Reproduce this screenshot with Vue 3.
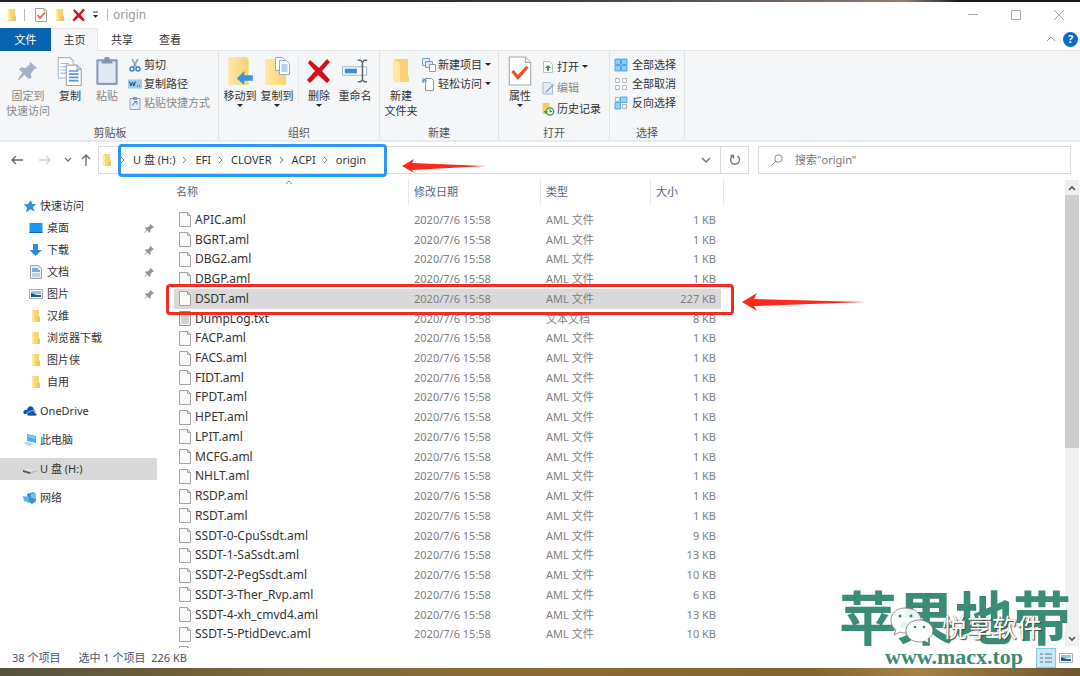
<script setup>
import { ref } from 'vue'

const tabs = ['主页', '共享', '查看']
const crumbs = ['U 盘 (H:)', 'EFI', 'CLOVER', 'ACPI', 'origin']
const query = ref('')

const names = [
  'APIC.aml', 'BGRT.aml', 'DBG2.aml', 'DBGP.aml', 'DSDT.aml', 'DumpLog.txt',
  'FACP.aml', 'FACS.aml', 'FIDT.aml', 'FPDT.aml', 'HPET.aml', 'LPIT.aml',
  'MCFG.aml', 'NHLT.aml', 'RSDP.aml', 'RSDT.aml', 'SSDT-0-CpuSsdt.aml',
  'SSDT-1-SaSsdt.aml', 'SSDT-2-PegSsdt.aml', 'SSDT-3-Ther_Rvp.aml',
  'SSDT-4-xh_cmvd4.aml', 'SSDT-5-PtidDevc.aml'
]
const sizes = [1, 1, 1, 1, 227, 8, 1, 1, 1, 1, 1, 1, 1, 1, 1, 1, 9, 13, 10, 6, 13, 10]
const files = names.map((name, i) => ({
  name,
  text: name.endsWith('.txt'),
  size: sizes[i] + ' KB',
  selected: name === 'DSDT.aml'
}))

const quick = [
  { label: '桌面', icon: 'desktop', pinned: true },
  { label: '下载', icon: 'download', pinned: true },
  { label: '文档', icon: 'document', pinned: true },
  { label: '图片', icon: 'picture', pinned: true },
  { label: '汉维', icon: 'folder' },
  { label: '浏览器下载', icon: 'folder' },
  { label: '图片侠', icon: 'folder' },
  { label: '自用', icon: 'folder' }
]
const places = [
  { label: 'OneDrive', icon: 'cloud' },
  { label: '此电脑', icon: 'pc' },
  { label: 'U 盘 (H:)', icon: 'drive', active: true },
  { label: '网络', icon: 'network' }
]
</script>

<template>
  <div class="desktop">
    <svg class="defs" aria-hidden="true">
      <defs>
        <linearGradient id="gFolder" x1="0" x2="1" y1="0" y2="0"><stop offset="0" stop-color="#ffe9a6" /><stop offset="1" stop-color="#f8d371" /></linearGradient>
        <symbol id="folder" viewBox="0 0 14 14"><path d="M3 1h7v6l1 1v5H3z" fill="#f8d676" /><path d="M3 1l2 1v11l-2-1z" fill="#ffe8a4" /><path d="M8 8h3v5H8z" fill="#f1c75c" /></symbol>
        <symbol id="checkdoc" viewBox="0 0 14 14"><path d="M1.500.5h8.500l2.500 2.500v10.500h-11z" fill="#fff" stroke="#a2a2a2" /><path d="M10 .5V3h2.500" fill="none" stroke="#aaa" /><path d="M3.500 7l2.500 3 5-5.500" fill="none" stroke="#e8643c" stroke-width="1.800" /></symbol>
        <symbol id="redx" viewBox="0 0 24 26"><path d="M3 2l9 8 8-9 3 3-8 9 8 9-3 3-9-8-8 8-3-3 8-9-7-8z" fill="#d40f1b" /></symbol>
        <symbol id="pin" viewBox="0 0 24 24"><path d="M14 2l8 7-3 1-4 5 1 4-3 2-5-5-6 6-1-1 5-7-4-4 3-2 4 1 5-4z" fill="#a3b1c7" /></symbol>
        <symbol id="smallpin" viewBox="0 0 12 12"><path d="M7 1l4 4-2 .5-2 2 .2 2L6 10.500 3.700 8.200 1 11l-.5-.5L3 7.500 1 5.500l1-1 2.200.3 2-2z" fill="#8b939e" /></symbol>
        <symbol id="copy" viewBox="0 0 24 28"><path d="M1 1.500h11l3 3v16H1z" fill="#fff" stroke="#a8b6cb" /><path d="M3 7h8M3 10h8M3 13h8M3 16h8" stroke="#9bb9e3" /><path d="M8.500 8.500h10l4 4v15h-14z" fill="#fff" stroke="#92a3bc" /><path d="M18.500 8.500v4h4" fill="none" stroke="#92a3bc" /><path d="M11 14h9M11 17h9M11 20h9M11 23h9" stroke="#5c94df" stroke-width="1.600" /></symbol>
        <symbol id="paste" viewBox="0 0 22 28"><rect x="1" y="3" width="20" height="24" rx="1" fill="#8b9cba" /><path d="M3 5h16v20H3z" fill="#e1e9f5" /><path d="M6 7V4h2l1-3h4l1 3h2v3z" fill="#8495b1" /></symbol>
        <symbol id="scissors" viewBox="0 0 12 14"><path d="M3 1l4.500 8M9 1L4.500 9" stroke="#8fa7be" stroke-width="1.600" /><circle cx="3" cy="11" r="2" fill="none" stroke="#2f86cf" stroke-width="1.500" /><circle cx="9" cy="11" r="2" fill="none" stroke="#2f86cf" stroke-width="1.500" /></symbol>
        <symbol id="path" viewBox="0 0 14 10"><rect width="14" height="9" y=".5" fill="#9ccbed" /><path d="M1.500 2.500l1.500 4.500 1.500-4 1.500 4 1.500-4.500M9 7h1M11 7h1" fill="none" stroke="#254a70" /></symbol>
        <symbol id="shortcut" viewBox="0 0 12 14"><path d="M1 2.500h10v11H1z" fill="#e5edf8" stroke="#8ea3c3" /><path d="M4 1h4v3H4z" fill="#8295b7" /><path d="M4 10V8l3-2M5 5.500h3v3" fill="none" stroke="#5a7db9" /></symbol>
        <symbol id="moveto" viewBox="0 0 26 28"><path d="M2 1h17l2 3v23H2z" fill="url(#gFolder)" /><path d="M25 18v5h-8v4l-7-6 7-7v4z" fill="#3496e5" /></symbol>
        <symbol id="copyto" viewBox="0 0 28 30"><path d="M2 3h17l4 3v23H2z" fill="url(#gFolder)" /><path d="M12.500 1.500h7l2 2v11h-9z" fill="#fff" stroke="#8fa9cd" /><path d="M16.500 4.500h7l3 3v11h-10z" fill="#fff" stroke="#8fa9cd" /><path d="M18.500 9h6M18.500 11h6M18.500 13h6M18.500 15h6" stroke="#69a3e5" /></symbol>
        <symbol id="rename" viewBox="0 0 28 26"><path d="M.5 8.500h26v9H.5z" fill="#fff" stroke="#9bb1c8" /><path d="M3 10.500h13v5H3z" fill="#318fdd" /><path d="M17 1.500h3l2 2 2-2h3M22 3v20M17 24.500h3l2-2 2 2h3" fill="none" stroke="#5a626b" stroke-width="1.600" /></symbol>
        <symbol id="bigfolder" viewBox="0 0 18 26"><path d="M3 1h13v17l1 1v5H3z" fill="#f7d177" /><path d="M1 1l7 4v20l-7-3z" fill="#ffe8a2" /></symbol>
        <symbol id="newitem" viewBox="0 0 14 14"><path d="M.5.5h7v7h-7z" fill="#e2f0fb" stroke="#7e9db6" /><path d="M3.500 3.500h7v6h-7z" fill="#d3e8f8" stroke="#7e9db6" /><path d="M7.500 6.500h6v7h-6z" fill="#fff" stroke="#8a98a4" /></symbol>
        <symbol id="easy" viewBox="0 0 14 14"><path d="M3.500 1.500h6l2 2v10h-8z" fill="#fff" stroke="#8a98a4" /><path d="M1 1v5M0 4h5M4 1L1 4" stroke="#3d92d4" /></symbol>
        <symbol id="prop" viewBox="0 0 22 28"><path d="M1 1h15l5 5v21H1z" fill="#fff" stroke="#a6a6a6" /><path d="M16 1v5h5" fill="#eee" stroke="#a6a6a6" /><path d="M4 14l5 6 9-10" fill="none" stroke="#e95424" stroke-width="3" /></symbol>
        <symbol id="open" viewBox="0 0 12 14"><path d="M1.500 1.500h6l3 3v8h-9z" fill="#fff" stroke="#b4bec5" /><path d="M6 5l3 3H7v3H5V8H3z" fill="#2e9e48" /></symbol>
        <symbol id="edit" viewBox="0 0 12 14"><path d="M1 1.500h7l2.500 2.500v9H1z" fill="#e5edf8" stroke="#a5b7d4" /><path d="M11 3l-7 7-1 2 2-1 7-7z" fill="#8ba4ce" /></symbol>
        <symbol id="history" viewBox="0 0 13 14"><path d="M1 1h7v11H1z" fill="#f5ce61" /><circle cx="8.500" cy="9.500" r="3.700" fill="#e7f1dc" stroke="#3e9b51" stroke-width="1.300" /><path d="M8.500 7.500v2h2" fill="none" stroke="#33708b" /><path d="M2 9l2.500 3L6 9z" fill="#2f9745" /></symbol>
        <symbol id="selall" viewBox="0 0 14 14"><path d="M1 1h5.500v5.500H1zM7.500 1H13v5.500H7.500zM1 7.500h5.500V13H1zM7.500 7.500H13V13H7.500z" fill="#8fcbf8" stroke="#3598e4" stroke-width=".8" /></symbol>
        <symbol id="selnone" viewBox="0 0 14 14"><path d="M1.500 1.500h4v4h-4zM8.500 1.500h4v4h-4zM1.500 8.500h4v4h-4zM8.500 8.500h4v4h-4z" fill="#fafafa" stroke="#b8bdc1" /></symbol>
        <symbol id="selinv" viewBox="0 0 14 14"><path d="M1.500 1.500h4v4h-4zM8.500 8.500h4v4h-4z" fill="#fafafa" stroke="#aeb7bd" /><path d="M6.500 1H13v5.500H6.500zM1 6.500h5.500V13H1z" fill="#96cff8" stroke="#3e9ee6" stroke-width=".8" /></symbol>
        <symbol id="star" viewBox="0 0 14 14"><path d="M8 1l1.200 4 4.300.2-3.500 2.800 1.500 4.500-4-2.200L3 13.500l1-5L.5 5.500l4.500-.5z" fill="#2a95e2" /></symbol>
        <symbol id="desktop" viewBox="0 0 14 14"><path d="M.5 2h13v10H.5z" fill="#1e97f3" /><path d="M.5 11h13v1H.5z" fill="#0c66b4" /></symbol>
        <symbol id="download" viewBox="0 0 14 14"><path d="M4 1h5v6h4l-6.500 6L.5 7H4z" fill="#2d8cdd" /></symbol>
        <symbol id="document" viewBox="0 0 14 14"><path d="M1.500.5h8l3 3v10h-11z" fill="#e9f1f7" stroke="#91a1ad" /><path d="M3 4h6M3 6h8" stroke="#4699d2" stroke-width="1.500" /><path d="M3 9h8M3 11h8" stroke="#9aafbd" /></symbol>
        <symbol id="picture" viewBox="0 0 14 14"><path d="M.5 2.500h13v9H.5z" fill="#fff" stroke="#a2b0ba" /><path d="M2 4h10v3H2z" fill="#8fc8ee" /><path d="M2 10V6l3 1 3 1h4v2z" fill="#245c86" /></symbol>
        <symbol id="cloud" viewBox="0 0 14 14"><path d="M1 10c-2-3 1-5 3-4 1-5 6-5 7 0l2 2H5v2z" fill="#0c57b6" /><path d="M4 10c0-2 2-3 3-2 2-3 5-1 5 1 3 0 2 3 0 3H6c-2 0-2-1-2-2z" fill="#1954a5" stroke="#fff" stroke-width=".6" /></symbol>
        <symbol id="pc" viewBox="0 0 14 14"><path d="M4 1l9 2v7L4 8z" fill="#47b0ed" /><path d="M5 2l8 2v2L5 4z" fill="#84cef6" /><path d="M0 10l4-1 7 2-5 2z" fill="#c3ced6" /></symbol>
        <symbol id="drive" viewBox="0 0 14 14"><path d="M0 8l6-1 8 1-7 3z" fill="#e6e6e6" /><path d="M0 8l7 2v2L0 10z" fill="#575757" /><path d="M7 10l7-2v1l-7 3z" fill="#b5b5b5" /></symbol>
        <symbol id="network" viewBox="0 0 14 14"><path d="M4 3l6-2 3 2v7l-4 3-4-3z" fill="#3391cf" /><path d="M8 2l5 1v5L8 7z" fill="#74c2ee" /><path d="M0 5l6 1v6L1 10z" fill="#5fb5e6" /></symbol>
        <symbol id="file" viewBox="0 0 12 15"><path d="M.5.5h8l3 3v11H.5z" fill="#fafafa" stroke="#a2a2a2" /><path d="M8.500.5v3h3" fill="none" stroke="#a2a2a2" /></symbol>
        <symbol id="textfile" viewBox="0 0 12 15"><path d="M.5.5h11v14H.5z" fill="#f6f6f6" stroke="#939393" /><path d="M2 4h8M2 6h8M2 8h8M2 10h8M2 12h8" stroke="#a9adb0" /></symbol>
      </defs>
    </svg>

    <div class="window">
      <header class="title">
        <svg class="i14"><use href="#folder" /></svg>
        <span class="bar"></span>
        <button class="qa" aria-label="属性"><svg class="i14"><use href="#checkdoc" /></svg></button>
        <button class="qa" aria-label="新建文件夹"><svg class="i14"><use href="#folder" /></svg></button>
        <button class="qa" aria-label="删除"><svg class="i14"><use href="#redx" /></svg></button>
        <button class="more" aria-label="自定义"><svg width="7" height="8" viewBox="0 0 7 8"><path d="M1 1h5" stroke="#333" /><path d="M1 4h5L3.500 7z" fill="#222" /></svg></button>
        <span class="bar"></span>
        <h1>origin</h1>
        <div class="controls">
          <button aria-label="最小化"><svg width="10" height="10" viewBox="0 0 10 10"><path d="M0 4.500h10" stroke="#aaa" /></svg></button>
          <button aria-label="最大化"><svg width="10" height="10" viewBox="0 0 10 10"><path d="M.5.5h9v9h-9z" fill="none" stroke="#aaa" /></svg></button>
          <button aria-label="关闭"><svg width="10" height="10" viewBox="0 0 10 10"><path d="M0 0l10 10M10 0L0 10" stroke="#aaa" /></svg></button>
        </div>
      </header>

      <nav class="tabs">
        <button class="tab primary">文件</button>
        <button v-for="(t, i) in tabs" :key="t" class="tab" :class="{ current: i === 0 }">{{ t }}</button>
        <button class="collapse" aria-label="折叠"><svg width="10" height="8" viewBox="0 0 10 8"><path d="M1 6l4-4 4 4" fill="none" stroke="#999" /></svg></button>
        <button class="help" aria-label="帮助">?</button>
      </nav>

      <section class="ribbon">
        <div class="group g-clip">
          <div class="tools">
            <button class="big w48 dim"><svg class="i30 inset"><use href="#pin" /></svg>固定到<br />快速访问</button>
            <button class="big w36"><svg class="i30"><use href="#copy" /></svg>复制</button>
            <button class="big w38 dim"><svg class="i30"><use href="#paste" /></svg>粘贴</button>
            <div class="stack">
              <button><svg class="i14"><use href="#scissors" /></svg>剪切</button>
              <button><svg class="i14"><use href="#path" /></svg>复制路径</button>
              <button class="dim"><svg class="i14"><use href="#shortcut" /></svg>粘贴快捷方式</button>
            </div>
          </div>
          <span class="caption">剪贴板</span>
        </div>
        <div class="group g-org">
          <div class="tools">
            <button class="big w38"><svg class="i30"><use href="#moveto" /></svg>移动到<i class="down"></i></button>
            <button class="big w36"><svg class="i30"><use href="#copyto" /></svg>复制到<i class="down"></i></button>
            <span class="split"></span>
            <button class="big w34"><svg class="i30 trim"><use href="#redx" /></svg>删除<i class="down"></i></button>
            <button class="big w38"><svg class="i30 trim"><use href="#rename" /></svg>重命名</button>
          </div>
          <span class="caption">组织</span>
        </div>
        <div class="group g-new">
          <div class="tools">
            <button class="big w38"><svg class="i30 trim"><use href="#bigfolder" /></svg>新建<br />文件夹</button>
            <div class="stack">
              <button><svg class="i14"><use href="#newitem" /></svg>新建项目<i class="down"></i></button>
              <button><svg class="i14"><use href="#easy" /></svg>轻松访问<i class="down"></i></button>
            </div>
          </div>
          <span class="caption">新建</span>
        </div>
        <div class="group g-open">
          <div class="tools">
            <button class="big w38"><svg class="i30"><use href="#prop" /></svg>属性<i class="down"></i></button>
            <div class="stack loose">
              <button><svg class="i14"><use href="#open" /></svg>打开<i class="down"></i></button>
              <button class="dim"><svg class="i14"><use href="#edit" /></svg>编辑</button>
              <button><svg class="i14"><use href="#history" /></svg>历史记录</button>
            </div>
          </div>
          <span class="caption">打开</span>
        </div>
        <div class="group g-sel">
          <div class="tools">
            <div class="stack wide">
              <button><svg class="i14"><use href="#selall" /></svg>全部选择</button>
              <button><svg class="i14"><use href="#selnone" /></svg>全部取消</button>
              <button><svg class="i14"><use href="#selinv" /></svg>反向选择</button>
            </div>
          </div>
          <span class="caption">选择</span>
        </div>
      </section>

      <section class="location">
        <div class="arrows">
          <button aria-label="后退"><svg width="12" height="12" viewBox="0 0 12 12"><path d="M12 6H1M5 2L1 6l4 4" fill="none" stroke="#666" stroke-width="1.300" /></svg></button>
          <button aria-label="前进"><svg width="12" height="12" viewBox="0 0 12 12"><path d="M0 6h11M7 2l4 4-4 4" fill="none" stroke="#d5d5d5" stroke-width="1.300" /></svg></button>
          <button class="tiny" aria-label="最近位置"><svg width="8" height="8" viewBox="0 0 8 8"><path d="M1 2l3 3 3-3" fill="none" stroke="#777" stroke-width="1.300" /></svg></button>
          <button aria-label="上移"><svg width="12" height="12" viewBox="0 0 12 12"><path d="M6 12V1M2 5l4-4 4 4" fill="none" stroke="#666" stroke-width="1.300" /></svg></button>
        </div>
        <div class="address">
          <svg class="i14"><use href="#folder" /></svg>
          <nav class="crumbs">
            <template v-for="c in crumbs" :key="c">
              <svg width="6" height="8" viewBox="0 0 6 8"><path d="M1 1l3 3-3 3" fill="none" stroke="#777" /></svg>
              <a href="#">{{ c }}</a>
            </template>
          </nav>
          <svg class="arrow-one" viewBox="0 0 84 14"><path d="M0 7L12 0l-2 4 74 3-74 4 2 3z" fill="#fb2a1c" /></svg>
          <button class="drop" aria-label="历史"><svg width="10" height="10" viewBox="0 0 10 10"><path d="M1 3l4 4 4-4" fill="none" stroke="#777" stroke-width="1.500" /></svg></button>
          <button class="refresh" aria-label="刷新"><svg width="12" height="12" viewBox="0 0 12 12"><path d="M8.500 2a4.500 4.500 0 1 1-5 0M1.500 1.500h3v3" fill="none" stroke="#777" stroke-width="1.400" /></svg></button>
        </div>
        <label class="search">
          <svg width="12" height="12" viewBox="0 0 12 12"><circle cx="7.500" cy="4.500" r="3.700" fill="none" stroke="#888" /><path d="M5 7L.5 11.500" stroke="#888" /></svg>
          <input v-model="query" type="text" aria-label="搜索" placeholder="搜索&quot;origin&quot;" />
        </label>
      </section>

      <main class="content">
        <aside class="side">
          <a href="#" class="node"><svg class="i14"><use href="#star" /></svg>快速访问</a>
          <a v-for="q in quick" :key="q.label" href="#" class="node child">
            <svg class="i14"><use :href="'#' + q.icon" /></svg>{{ q.label }}
            <svg v-if="q.pinned" class="pinned"><use href="#smallpin" /></svg>
          </a>
          <a v-for="p in places" :key="p.label" href="#" class="node place" :class="{ active: p.active }">
            <svg class="i14"><use :href="'#' + p.icon" /></svg>{{ p.label }}
          </a>
        </aside>

        <div class="listing">
          <table>
            <thead>
              <tr>
                <th>名称<svg class="sort" width="8" height="5" viewBox="0 0 8 5"><path d="M1 4l3-3 3 3" fill="none" stroke="#888" /></svg></th>
                <th>修改日期</th>
                <th>类型</th>
                <th>大小</th>
              </tr>
            </thead>
            <tbody>
              <tr v-for="f in files" :key="f.name" :class="{ selected: f.selected }">
                <td class="name"><svg class="doc"><use :href="f.text ? '#textfile' : '#file'" /></svg>{{ f.name }}</td>
                <td>2020/7/6 15:58</td>
                <td>{{ f.text ? '文本文档' : 'AML 文件' }}</td>
                <td class="size">{{ f.size }}
                  <svg v-if="f.selected" class="arrow-two" viewBox="0 0 124 18"><path d="M0 9L15 0l-3 6 112 3-112 4 3 5z" fill="#fb2a1c" /></svg>
                </td>
              </tr>
            </tbody>
          </table>
          <div class="peek"><svg class="doc"><use href="#file" /></svg></div>
        </div>

        <div class="scroll">
          <button aria-label="向上滚动"><svg width="8" height="6" viewBox="0 0 8 6"><path d="M1 5l3-3 3 3" fill="none" stroke="#555" stroke-width="1.600" /></svg></button>
          <div class="track"><div class="thumb"></div></div>
          <button aria-label="向下滚动"><svg width="8" height="6" viewBox="0 0 8 6"><path d="M1 1l3 3 3-3" fill="none" stroke="#555" stroke-width="1.600" /></svg></button>
        </div>
      </main>

      <footer class="status">
        <span>38 个项目</span>
        <span>选中 1 个项目&nbsp; 226 KB</span>
        <div class="views">
          <button class="on" aria-label="详细信息"><svg width="14" height="12" viewBox="0 0 14 12"><path d="M1 2h3M6 2h7M1 6h3M6 6h7M1 10h3M6 10h7" stroke="#557b96" /></svg></button>
          <button aria-label="大图标"><svg class="i14"><use href="#picture" /></svg></button>
        </div>
      </footer>
    </div>

    <div class="mark">
      <strong>苹果地带</strong>
      <span class="site">www.macx.top</span>
      <div class="chat">
        <svg width="44" height="38" viewBox="0 0 44 38">
          <path d="M15 1C6 1 1 7 1 13c0 5 2 8 5 10l-2 5 6-3c2 1 5 1 8 1 8-1 13-6 13-13S24 1 15 1z" fill="#fff" fill-opacity=".9" stroke="#777" stroke-width=".8" />
          <circle cx="10" cy="9" r="1.500" fill="#2f8a70" /><circle cx="21" cy="9" r="1.500" fill="#2f8a70" />
          <path d="M29 13c-8 0-13 5-13 11s6 11 13 11c2 0 4 0 5-1l5 2-1-4c3-2 5-5 5-8 0-6-6-11-14-11z" fill="#fff" stroke="#777" stroke-width=".8" />
          <circle cx="25" cy="20" r="1.300" fill="#2f8a70" /><circle cx="34" cy="20" r="1.300" fill="#2f8a70" />
        </svg>
        <span>悦享软件</span>
      </div>
    </div>
  </div>
</template>

<style>
html, body { margin: 0; }
</style>

<style scoped>
* { box-sizing: border-box; }
.desktop {
  position: relative;
  display: flex;
  flex-direction: column;
  height: 100vh;
  min-height: 600px;
  padding: 2px 0 8px;
  overflow: hidden;
  font: 12px/16px "Noto Sans", "Noto Sans CJK SC", sans-serif;
  color: #333;
  background: linear-gradient(90deg, #55523e, #746238 20%, #7d6a3c 26%, #8a6b34 50%, #806530 75%, #a48245 85%, #6d552e);
}
.desktop::before {
  content: "";
  position: absolute;
  inset: 0 0 auto;
  height: 2px;
  background: linear-gradient(90deg, #222 0 20%, #3a3635 50%, #8c7c70 84%, #181818 89%);
}
.defs { position: absolute; width: 0; height: 0; }
button { display: flex; align-items: center; justify-content: center; padding: 0; border: 0; background: none; color: inherit; font: inherit; }
a { color: inherit; text-decoration: none; }
svg { flex: none; display: block; }
.i14 { width: 14px; height: 14px; }
.window { position: relative; flex: 1; min-height: 0; display: flex; flex-direction: column; background: #fff; }

.title { display: flex; align-items: center; height: 26px; padding-left: 5px; }
.title .bar { width: 1px; height: 12px; margin: 0 5px; background: #bbb; }
.qa { width: 19px; height: 20px; }
.title .bar + .qa { margin-left: 1px; }
.more { width: 14px; height: 20px; }
.title h1 { margin: 0; font-size: 12px; font-weight: 400; color: #999; }
.controls { display: flex; margin-left: auto; }
.controls button { width: 43px; height: 24px; }

.tabs { display: flex; height: 23px; font-size: 11px; border-bottom: 1px solid #e3e5e7; }
.tab { width: 48px; height: 23px; }
.tab.primary { width: 51px; color: #fff; background: #0863b0; }
.tab.current { width: 47px; background: #f5f6f7; border: 1px solid #e6e8ea; border-bottom: 0; }
.collapse { width: 20px; margin-left: auto; }
.help { align-self: center; width: 15px; height: 15px; margin: 0 2px; border-radius: 50%; background: #0a6cc9; color: #fff; font-weight: 700; }

.ribbon { display: flex; height: 91px; background: #f5f6f7; border-bottom: 2px solid #e8ebee; font-size: 11px; line-height: 15px; }
.group { display: flex; flex-direction: column; align-items: stretch; padding: 5px 2px 0; border-right: 1px solid #e2e4e6; }
.g-clip { width: 219px; padding-left: 4px; }
.g-org { width: 161px; }
.g-new { width: 119px; }
.g-open { width: 111px; }
.g-sel { width: 75px; }
.tools { display: flex; height: 69px; }
.caption { text-align: center; color: #555; }
.big { flex-direction: column; justify-content: flex-start; align-self: flex-start; white-space: nowrap; }
.i30 { width: 30px; height: 30px; margin-bottom: 2px; }
.i30.trim { padding: 2px; }
.i30.inset { padding: 4px; }
.w48 { width: 48px; }
.w38 { width: 38px; }
.w36 { width: 36px; }
.w34 { width: 34px; }
.dim { color: #888; }
.down { width: 0; height: 0; border: 3px solid transparent; border-top-color: #222; border-bottom: 0; }
.big .down { margin-top: 1px; }
.stack .down { margin-left: 1px; }
.split { width: 1px; height: 48px; margin: 0 3px; background: #e6e8ea; }
.stack { display: flex; flex-direction: column; padding-left: 2px; }
.stack button { justify-content: flex-start; gap: 2px; height: 19px; line-height: 17px; padding-bottom: 2px; white-space: nowrap; }
.stack.loose button { height: 21px; padding-bottom: 0; }
.stack.wide button { gap: 4px; }

.location { display: flex; height: 36px; padding: 4px 9px 4px 0; }
.arrows { display: flex; width: 98px; padding-left: 5px; }
.arrows button { width: 24px; }
.arrows button + button { width: 32px; }
.arrows .tiny.tiny { width: 14px; }
.arrows button:last-child { width: 22px; }
.address { position: relative; flex: 1; display: flex; border: 1px solid #dcdcdc; }
.address > .i14 { align-self: center; margin-left: 1px; }
.crumbs { position: relative; display: flex; align-items: center; gap: 7px; margin-left: 6px; font-size: 11px; }
.crumbs::after { content: ""; position: absolute; inset: -3px -21px -4px -2px; border: 3px solid #2c97f2; border-radius: 4px; }
.arrow-one { position: absolute; left: 303px; top: 12px; width: 84px; height: 14px; }
.drop { width: 28px; margin-left: auto; }
.refresh { width: 28px; border-left: 1px solid #dcdcdc; }
.search { flex: 0 1 313px; display: flex; align-items: center; gap: 12px; margin-left: 9px; padding-left: 12px; border: 1px solid #dcdcdc; font-size: 11px; }
.search input { flex: 1; min-width: 0; padding: 0; border: 0; outline: 0; background: none; font: inherit; color: #555; }
.search input::placeholder { color: #777; opacity: 1; }

.content { flex: 1; min-height: 0; display: grid; grid-template-columns: 158px 1fr 15px; }
.side { padding: 17px 1px 0 0; font-size: 11px; }
.node { display: flex; align-items: center; gap: 3px; height: 22px; padding-left: 23px; }
.child { padding-left: 29px; gap: 4px; }
.place { margin-top: 7px; }
.active { background: #d9d9d9; }
.pinned { width: 11px; height: 11px; margin: 0 2px 0 auto; }

.listing { display: flex; flex-direction: column; min-height: 0; padding-left: 16px; }
table { flex: 1; min-height: 0; display: flex; flex-direction: column; }
thead { height: 32px; padding-top: 1px; }
thead, tbody { display: block; }
tbody { flex: 1; min-height: 0; display: flex; flex-direction: column; }
tr { display: grid; grid-template-columns: 235px 132px 110px 73px; width: 550px; }
tbody tr { position: relative; flex: 1; align-items: center; }
th { height: 25px; padding: 0 0 0 5px; border-right: 1px solid #e8e8e8; font-size: 11px; font-weight: 400; line-height: 25px; text-align: left; color: #536480; }
th:first-child { position: relative; padding-left: 2px; }
.sort { position: absolute; left: 111px; top: 1px; }
td { padding: 0 0 0 5px; font-size: 11px; color: #808080; white-space: nowrap; }
td.name { display: flex; align-items: center; gap: 4px; font-size: 12px; color: #333; }
td.size { padding: 0 8px 0 0; text-align: right; }
.doc { width: 12px; height: 15px; }
.selected::before { content: ""; position: absolute; z-index: -1; inset: 0 3px 0 0; background: #d9d9d9; }
.selected { isolation: isolate; z-index: 1; }
.selected::after { content: ""; position: absolute; inset: -5px -10px -6px -8px; border: 3px solid #ef2d25; border-radius: 4px; }
.arrow-two { position: absolute; left: 568px; top: 4px; width: 124px; height: 18px; }
.peek { height: 4px; padding: 2px 0 0 5px; overflow: hidden; }

.scroll { display: flex; flex-direction: column; margin: 2px 1px 2px 0; background: #f0f0f0; }
.scroll button { height: 15px; }
.track { flex: 1; }
.thumb { height: 58%; background: #cdcdcd; }

.status { display: flex; align-items: center; gap: 18px; height: 20px; padding-left: 12px; font-size: 11px; color: #43536f; }
.views { display: flex; margin-left: auto; padding-right: 4px; }
.views button { width: 20px; height: 20px; }
.views .on { background: #c9e8f7; border: 1px solid #8ac6e6; }

.mark { position: absolute; right: 9px; bottom: 4px; width: 232px; height: 86px; color: #38897a; color: #3a8c76; pointer-events: none; }
.mark strong { display: block; font: 700 58px/58px "Noto Sans CJK SC", sans-serif; white-space: nowrap; }
.site { position: absolute; left: 46px; bottom: 4px; font: 700 22px/22px "Liberation Serif", serif; }
.chat { position: absolute; left: 51px; top: 21px; display: flex; align-items: center; gap: 8px; }
.chat span { font: 400 25px/38px "Noto Sans CJK SC", sans-serif; color: #fff; text-shadow: 1px 1px 1px #444, 0 0 1px #666; white-space: nowrap; }
</style>
